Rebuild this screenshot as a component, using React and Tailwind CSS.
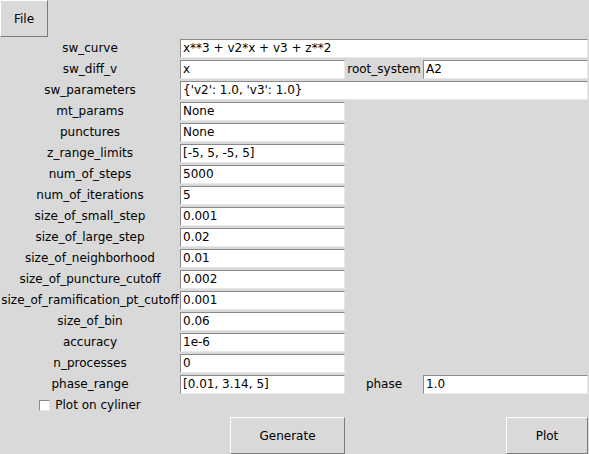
import React from "react";

const font = { fontFamily: '"DejaVu Sans", sans-serif' };

function Entry({ value, className = "" }) {
  return (
    <div
      className={`h-[19px] bg-white border border-t-[#8a8a8a] border-l-[#8a8a8a] border-r-[#e8e8e8] border-b-[#e8e8e8] pl-[2px] leading-[17px] whitespace-nowrap overflow-hidden ${className}`}
    >
      {value}
    </div>
  );
}

function Label({ children, className = "" }) {
  return (
    <div className={`text-center whitespace-nowrap leading-[21px] ${className}`}>
      {children}
    </div>
  );
}

const rows = [
  ["mt_params", "None"],
  ["punctures", "None"],
  ["z_range_limits", "[-5, 5, -5, 5]"],
  ["num_of_steps", "5000"],
  ["num_of_iterations", "5"],
  ["size_of_small_step", "0.001"],
  ["size_of_large_step", "0.02"],
  ["size_of_neighborhood", "0.01"],
  ["size_of_puncture_cutoff", "0.002"],
  ["size_of_ramification_pt_cutoff", "0.001"],
  ["size_of_bin", "0.06"],
  ["accuracy", "1e-6"],
  ["n_processes", "0"],
];

function Button({ children, className = "" }) {
  return (
    <div
      className={`flex items-center justify-center bg-[#d9d9d9] border border-t-[#fdfdfd] border-l-[#fdfdfd] border-r-[#7a7a7a] border-b-[#7a7a7a] ${className}`}
    >
      {children}
    </div>
  );
}

export default function App() {
  return (
    <div
      className="w-[589px] h-[454px] bg-[#d9d9d9] text-[12px] text-black overflow-hidden"
      style={font}
    >
      {/* menu */}
      <div className="h-[38px]">
        <Button className="w-[48px] h-[37px]">File</Button>
      </div>

      {/* form */}
      <div className="flex flex-col">
        <div className="flex items-center h-[21px]">
          <Label className="w-[180px]">sw_curve</Label>
          <Entry value="x**3 + v2*x + v3 + z**2" className="w-[408px]" />
        </div>
        <div className="flex items-center h-[21px]">
          <Label className="w-[180px]">sw_diff_v</Label>
          <Entry value="x" className="w-[165px]" />
          <Label className="w-[78px]">root_system</Label>
          <Entry value="A2" className="w-[165px]" />
        </div>
        <div className="flex items-center h-[21px]">
          <Label className="w-[180px]">sw_parameters</Label>
          <Entry value="{'v2': 1.0, 'v3': 1.0}" className="w-[408px]" />
        </div>
        {rows.map(([k, v]) => (
          <div key={k} className="flex items-center h-[21px]">
            <Label className="w-[180px]">{k}</Label>
            <Entry value={v} className="w-[165px]" />
          </div>
        ))}
        <div className="flex items-center h-[21px]">
          <Label className="w-[180px]">phase_range</Label>
          <Entry value="[0.01, 3.14, 5]" className="w-[165px]" />
          <Label className="w-[78px]">phase</Label>
          <Entry value="1.0" className="w-[165px]" />
        </div>
        <div className="flex items-center h-[21px]">
          <div className="w-[180px] flex items-center justify-center gap-[5px]">
            <span className="w-[11px] h-[11px] bg-white border border-t-[#8a8a8a] border-l-[#8a8a8a] border-r-[#e8e8e8] border-b-[#e8e8e8]" />
            <span className="leading-[21px]">Plot on cyliner</span>
          </div>
        </div>
        <div className="flex mt-[1px]">
          <div className="w-[230px]" />
          <Button className="w-[115px] h-[37px]">Generate</Button>
          <div className="flex-1" />
          <Button className="w-[82px] h-[37px]">Plot</Button>
          <div className="w-[1px]" />
        </div>
      </div>
    </div>
  );
}
